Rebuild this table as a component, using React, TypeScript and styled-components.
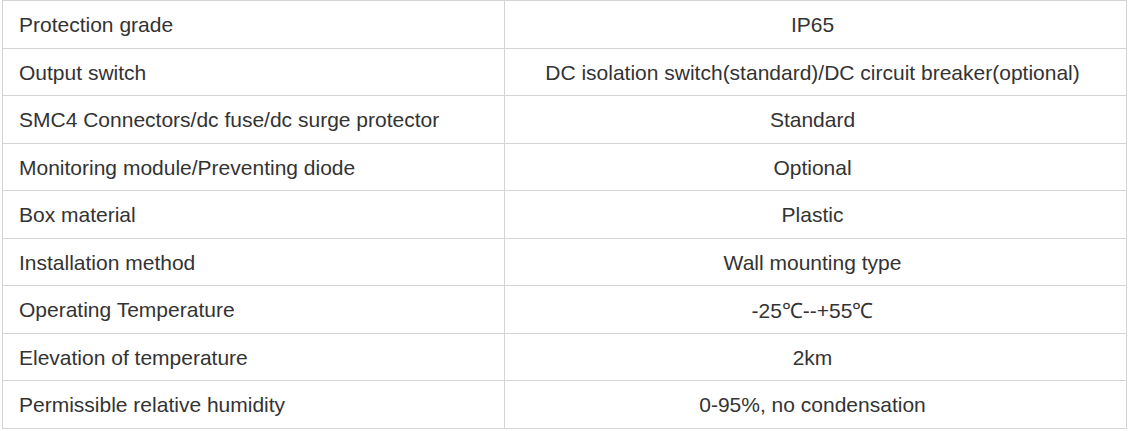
import styled, { createGlobalStyle } from "styled-components";

const rows: [string, string][] = [
  ["Protection grade", "IP65"],
  ["Output switch", "DC isolation switch(standard)/DC circuit breaker(optional)"],
  ["SMC4 Connectors/dc fuse/dc surge protector", "Standard"],
  ["Monitoring module/Preventing diode", "Optional"],
  ["Box material", "Plastic"],
  ["Installation method", "Wall mounting type"],
  ["Operating Temperature", "-25℃--+55℃"],
  ["Elevation of temperature", "2km"],
  ["Permissible relative humidity", "0-95%, no condensation"],
];

const GlobalStyle = createGlobalStyle`
  body {
    margin: 0;
    background: #fff;
    font-family: "Liberation Sans", Arial, sans-serif;
  }
`;

const Wrap = styled.div`
  padding: 0 1px 0 2px;
`;

const SpecTable = styled.table`
  width: 1125px;
  border-collapse: collapse;
  color: #333;
  font-size: 21px;
`;

const Row = styled.tr`
  height: 47.5px;
`;

const Cell = styled.td<{ center?: boolean }>`
  border: 1px solid #d4d4d4;
  padding: ${(p) => (p.center ? "2px 22px 0 16px" : "2px 16px 0")};
  text-align: ${(p) => (p.center ? "center" : "left")};
  width: ${(p) => (p.center ? "auto" : "469px")};
  vertical-align: middle;
`;

const App = () => {
  return (
    <Wrap>
      <GlobalStyle />
      <SpecTable>
        <tbody>
          {rows.map(([k, v]) => (
            <Row key={k}>
              <Cell>{k}</Cell>
              <Cell center>{v}</Cell>
            </Row>
          ))}
        </tbody>
      </SpecTable>
    </Wrap>
  );
};

export default App;
